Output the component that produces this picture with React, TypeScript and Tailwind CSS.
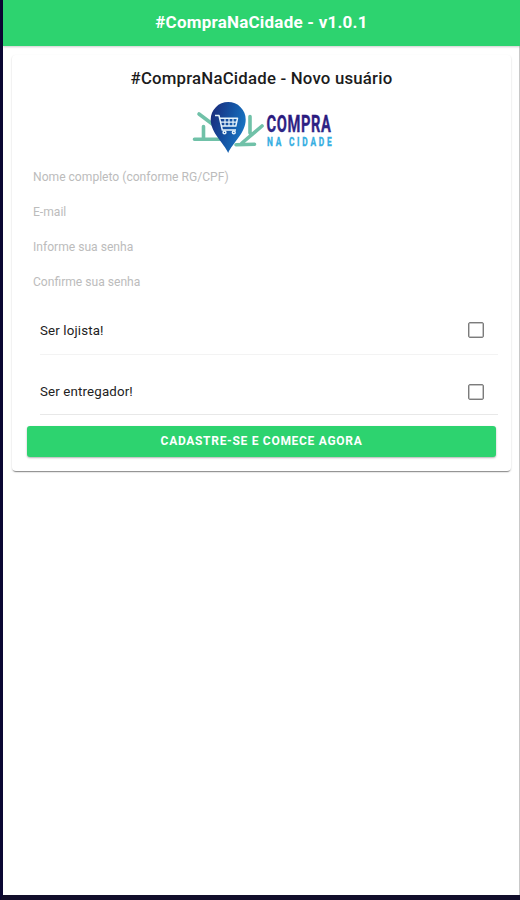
import { useState } from 'react';

const fields = [
  { name: 'nome', type: 'text', placeholder: 'Nome completo (conforme RG/CPF)' },
  { name: 'email', type: 'email', placeholder: 'E-mail' },
  { name: 'senha', type: 'password', placeholder: 'Informe sua senha' },
  { name: 'confirma', type: 'password', placeholder: 'Confirme sua senha' },
];

const Logo = () => (
  <svg viewBox="0 0 155 58" className="ml-[178px] block h-[58px] w-[155px] overflow-visible" role="img" aria-label="Compra na Cidade">
    <defs>
      <linearGradient id="pin" x1="0" y1="0.2" x2="1" y2="0.6">
        <stop offset="0" stopColor="#1b2c7c" />
        <stop offset="0.5" stopColor="#1552a2" />
        <stop offset="1" stopColor="#1879c6" />
      </linearGradient>
      <linearGradient id="name" x1="0" y1="0" x2="0" y2="1">
        <stop offset="0" stopColor="#29167a" />
        <stop offset="1" stopColor="#302d8c" />
      </linearGradient>
    </defs>
    <g stroke="#70c1a8" strokeWidth="3.6" strokeLinecap="round" fill="none">
      <path d="M9 16 L25 28 M13.5 28.5 V41 M4.5 41.3 H30" />
      <path d="M60 18.5 V35 M72 28 L52 45 M46 46.8 L64.5 46.2" />
    </g>
    <path d="M38.2 55 C34 45 20.7 35 20.7 21.5 A17.5 17.5 0 0 1 55.7 21.5 C55.7 35 42.5 45 38.2 55 Z" fill="url(#pin)" />
    <g stroke="#e6f3fb" strokeWidth="1.5" fill="none" strokeLinejoin="round">
      <path d="M25 17.5 H29 L32.3 32 H46" />
      <path d="M30 20.3 H47.5 L45.8 28 H31.5" />
      <path d="M31 24.2 H46.5 M35 20.5 V28 M39 20.5 V28 M43 20.5 V28" strokeWidth="1.2" />
      <circle cx="34.5" cy="34.4" r="1.4" />
      <circle cx="43.8" cy="34.4" r="1.4" />
    </g>
    <g transform="translate(76.5 33.7) scale(0.6 1)">
      <text x="0" y="0" textLength="107.5" lengthAdjust="spacing" fill="url(#name)" stroke="url(#name)" strokeWidth="0.3" className="font-['Roboto',sans-serif] text-[24.5px] font-bold">
        COMPRA
      </text>
    </g>
    <g transform="translate(77 48) scale(0.64 1)">
      <text x="0" y="0" textLength="101" lengthAdjust="spacing" fill="#35aee2" stroke="#35aee2" strokeWidth="0.4" className="font-['Roboto',sans-serif] text-[13px] font-bold">
        NA CIDADE
      </text>
    </g>
  </svg>
);

interface Iprops {
  label: string;
  className: string;
}

const CheckItem = ({ label, className }: Iprops) => {
  const [checked, setChecked] = useState(false);

  return (
    <label className={`ml-[28px] mr-[13px] flex items-center justify-between border-b pr-[14px] text-[13.3px] tracking-[0.15px] text-[#222] ${className}`}>
      <span className="pt-px">{label}</span>
      <input
        type="checkbox"
        checked={checked}
        onChange={() => setChecked(!checked)}
        className="size-4 appearance-none rounded-[2px] border-[1.5px] border-[#7c7c7c] shadow-[inset_0_0_0_0.5px_#8c8c8c] checked:border-[#2dd36f] checked:bg-[#2dd36f]"
      />
    </label>
  );
};

export default function App() {
  return (
    <div className="flex h-[900px] w-[520px] flex-col border-b-[5px] border-l-[3px] border-b-[#120e2b] border-l-[#0b0733] bg-white font-['Roboto',sans-serif]">
      <div className="flex flex-1 flex-col border-r border-r-[#c9c9c9]">
        <header className="-mr-px flex h-[46px] items-center justify-center bg-[#2dd36f] pb-px text-[17px] font-bold text-white shadow-[0_1px_2px_rgba(0,0,0,0.2)]">
          <h1 className="tracking-[0.22px]">#CompraNaCidade - v1.0.1</h1>
        </header>

        <main className="ml-[9px] mr-[8px] mt-[9px] h-[416px] rounded-[4px] shadow-[0_2px_1px_-1px_rgba(0,0,0,0.35),0_1px_2px_0_rgba(0,0,0,0.2)]">
          <h2 className="flex h-[43px] items-center justify-center pt-[4px] text-[16.8px] font-medium tracking-[0.2px] text-[#1c1c1c]">
            #CompraNaCidade - Novo usuário
          </h2>
          <Logo />

          <form onSubmit={(e) => e.preventDefault()}>
            <div className="flex flex-col pl-[21px] pt-[3px]">
              {fields.map((f) => (
                <input
                  key={f.name}
                  type={f.type}
                  name={f.name}
                  placeholder={f.placeholder}
                  className="h-[35px] w-[440px] text-[12.1px] outline-none placeholder:text-[#bcbcbc] placeholder:opacity-100"
                />
              ))}
            </div>

            <CheckItem label="Ser lojista!" className="mt-[7px] h-[49px] border-[#f3f3f3]" />
            <CheckItem label="Ser entregador!" className="mt-[12px] h-[48px] border-[#e8e8e8] pt-[2px]" />

            <button
              type="submit"
              className="ml-[15px] mt-[11px] flex h-[31px] w-[469px] items-center justify-center rounded-[3px] bg-[#2dd36f] pb-[2px] text-[12px] font-bold tracking-[0.7px] text-white shadow-[0_1px_2px_rgba(0,0,0,0.3)]"
            >
              CADASTRE-SE E COMECE AGORA
            </button>
          </form>
        </main>
      </div>
    </div>
  );
}
